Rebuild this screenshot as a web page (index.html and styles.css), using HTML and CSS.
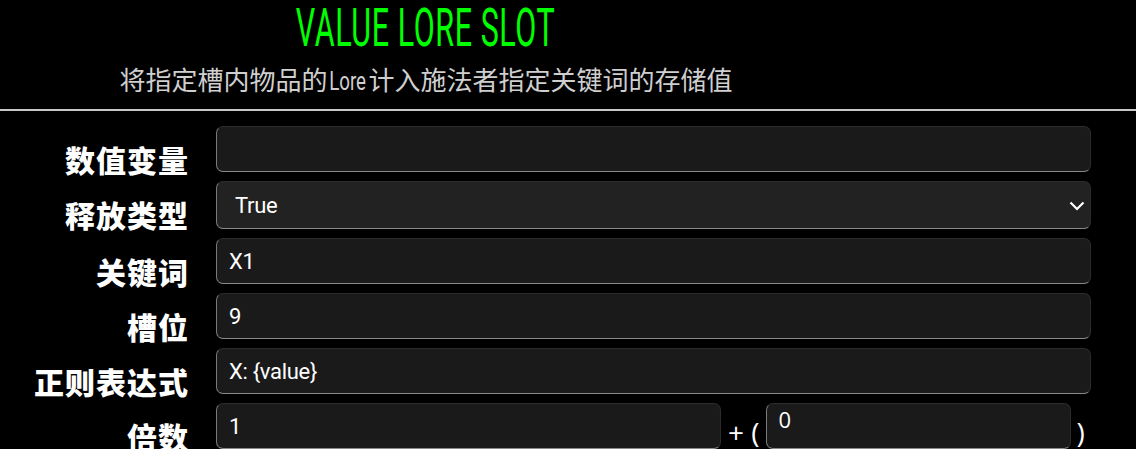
FILE: index.html
```html
<!DOCTYPE html>
<html lang="zh">
<head>
<meta charset="utf-8">
<title>Value Lore Slot</title>
<link rel="stylesheet" href="styles.css">
</head>
<body>
<header class="header">
  <h1 class="title"><span class="title-text">VALUE LORE SLOT</span></h1>
  <p class="subtitle">将指定槽内物品的<span class="lore">Lore</span>计入施法者指定关键词的存储值</p>
</header>
<hr class="divider">
<form class="form">
  <label class="label">数值变量</label>
  <input class="field" type="text" value="">

  <label class="label">释放类型</label>
  <div class="select-wrap">
    <select class="field select">
      <option>True</option>
      <option>False</option>
    </select>
    <svg class="chevron" width="16" height="10" viewBox="0 0 16 10"><path d="M1.5 1.5 L8 8 L14.5 1.5" fill="none" stroke="#fff" stroke-width="2.2"/></svg>
  </div>

  <label class="label">关键词</label>
  <input class="field" type="text" value="X1">

  <label class="label">槽位</label>
  <input class="field" type="text" value="9">

  <label class="label">正则表达式</label>
  <input class="field" type="text" value="X: {value}">

  <label class="label">倍数</label>
  <div class="multi">
    <input class="field" type="text" value="1">
    <span class="op">+ (</span>
    <input class="field alt" type="text" value="0">
    <span class="op close">)</span>
  </div>
</form>
</body>
</html>
```
FILE: styles.css
```css
html, body {
  margin: 0;
  padding: 0;
  background: #000;
  color: #fff;
  font-family: Roboto, "Noto Sans CJK SC", sans-serif;
  overflow: hidden;
}
.header {
  width: 75%;
  text-align: center;
}
.title {
  margin: 0;
  height: 56px;
  line-height: 56px;
  font-weight: 400;
}
.title-text {
  display: inline-block;
  font-family: Roboto, sans-serif;
  font-size: 53px;
  color: #00ff00;
  transform: scaleX(0.575);
  letter-spacing: 1px;
}
.subtitle {
  margin: 3px 0 0 0;
  font-family: "Noto Sans CJK SC", sans-serif;
  font-size: 26px;
  line-height: 40px;
  color: #cfcfcf;
}
.lore {
  font-family: Roboto, sans-serif;
  display: inline-block;
  transform: scaleX(0.72);
  margin: 0 -5px;
}
.divider {
  margin: 8px 0 0 0;
  border: 0;
  height: 2px;
  background: #c8c8c8;
}
.form {
  display: grid;
  grid-template-columns: 188px 875px;
  column-gap: 28px;
  row-gap: 9px;
  padding-top: 15px;
}
.label {
  font-family: "Noto Sans CJK SC", sans-serif;
  font-weight: 900;
  font-size: 30px;
  line-height: 46px;
  text-align: right;
  position: relative;
  top: 10px;
  letter-spacing: 1px;
  margin-right: -1px;
}
.field {
  box-sizing: border-box;
  height: 46px;
  width: 100%;
  background: #1a1a1a;
  color: #fff;
  border: 1px solid #2c2c2c;
  border-left-color: #7a7a7a;
  border-bottom-color: #8a8a8a;
  border-radius: 7px;
  padding: 0 12px;
  font-family: Roboto, sans-serif;
  font-size: 22px;
  font-weight: 400;
  letter-spacing: -0.3px;
  outline: none;
}
.select-wrap {
  position: relative;
}
.select {
  appearance: none;
  -webkit-appearance: none;
  background: #222;
  padding-left: 18px;
  height: 48px;
}
.chevron {
  position: absolute;
  right: 6px;
  top: 20px;
}
.multi {
  display: flex;
  align-items: flex-start;
}
.multi .field {
  width: 505px;
  flex: none;
}
.multi .field.alt {
  width: 305px;
  font-family: "Open Sans", sans-serif;
  padding-bottom: 14px;
}
.op {
  font-family: "Open Sans", sans-serif;
  font-size: 28px;
  line-height: 34px;
  margin: 12px 6px 0 7px;
  white-space: nowrap;
}
.op.close {
  margin-left: 6px;
}
```
